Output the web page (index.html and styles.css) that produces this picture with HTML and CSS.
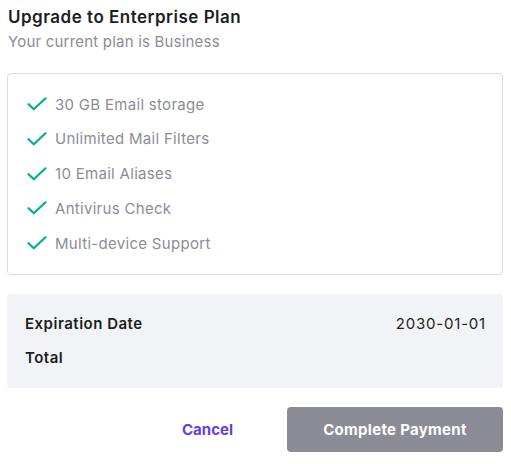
FILE: index.html
```html
<!DOCTYPE html>
<html lang="en">
<head>
    <meta charset="UTF-8">
    <meta name="viewport" content="width=device-width, initial-scale=1.0">
    <title>Upgrade to Enterprise Plan</title>
    <link rel="stylesheet" href="styles.css">
</head>
<body>
    <div class="modal">
        <h2 class="title">Upgrade to Enterprise Plan</h2>
        <p class="subtitle">Your current plan is Business</p>

        <ul class="features">
            <li><svg class="check" viewBox="0 0 20 14"><path d="M1.5 7.2l5.3 5.1L18.5 1.3"/></svg>30 GB Email storage</li>
            <li><svg class="check" viewBox="0 0 20 14"><path d="M1.5 7.2l5.3 5.1L18.5 1.3"/></svg>Unlimited Mail Filters</li>
            <li><svg class="check" viewBox="0 0 20 14"><path d="M1.5 7.2l5.3 5.1L18.5 1.3"/></svg>10 Email Aliases</li>
            <li><svg class="check" viewBox="0 0 20 14"><path d="M1.5 7.2l5.3 5.1L18.5 1.3"/></svg>Antivirus Check</li>
            <li><svg class="check" viewBox="0 0 20 14"><path d="M1.5 7.2l5.3 5.1L18.5 1.3"/></svg>Multi-device Support</li>
        </ul>

        <div class="summary">
            <div class="summary-row">
                <span class="label">Expiration Date</span>
                <span class="value">2030-01-01</span>
            </div>
            <div class="summary-row">
                <span class="label">Total</span>
                <span class="value"></span>
            </div>
        </div>

        <div class="actions">
            <button class="btn-cancel">Cancel</button>
            <button class="btn-pay" disabled>Complete Payment</button>
        </div>
    </div>
</body>
</html>
```

FILE: styles.css
```css
body {
    margin: 0;
    font-family: Inter, "Noto Sans", sans-serif;
    background: white;
    color: #1d1e20;
}
.modal {
    padding: 6px 8px 0 7px;
}
.title {
    margin: 0;
    padding-left: 1px;
    font-size: 17px;
    line-height: 22px;
    font-weight: 600;
    letter-spacing: 0.5px;
    color: #1d1e20;
}
.subtitle {
    margin: 4px 0 0;
    padding-left: 1px;
    font-size: 15px;
    line-height: 20px;
    letter-spacing: 0.2px;
    color: #8c8c98;
}
.features {
    list-style: none;
    margin: 21px 0 0;
    padding: 18px 20px 19px 19px;
    border: 1px solid #dadce0;
    border-radius: 4px;
    display: flex;
    flex-direction: column;
    gap: 10.75px;
}
.features li {
    display: flex;
    align-items: center;
    height: 24px;
    font-size: 15px;
    letter-spacing: 0.3px;
    color: #8c8c98;
}
.check {
    width: 20px;
    height: 14px;
    margin-right: 8px;
    fill: none;
    stroke: #00b090;
    stroke-width: 2.2;
    stroke-linecap: round;
    stroke-linejoin: round;
}
.summary {
    margin-top: 19px;
    background-color: #f2f3f6;
    border-radius: 4px;
    padding: 20px 17px 20px 18px;
    display: flex;
    flex-direction: column;
    gap: 14px;
}
.summary-row {
    display: flex;
    justify-content: space-between;
    height: 20px;
    line-height: 20px;
    font-size: 15px;
}
.label {
    font-weight: 600;
    letter-spacing: 0.5px;
}
.value {
    letter-spacing: 0.8px;
}
.actions {
    margin-top: 19px;
    display: flex;
    justify-content: flex-end;
    gap: 16px;
}
button {
    font-family: inherit;
    font-size: 15px;
    font-weight: 700;
    border: none;
    border-radius: 4px;
    cursor: pointer;
}
.btn-cancel {
    background: none;
    color: #673de6;
    padding: 0 38px;
    height: 45px;
}
.btn-pay {
    width: 216px;
    height: 45px;
    background-color: #8c8c96;
    color: white;
    letter-spacing: 0.3px;
}
```
